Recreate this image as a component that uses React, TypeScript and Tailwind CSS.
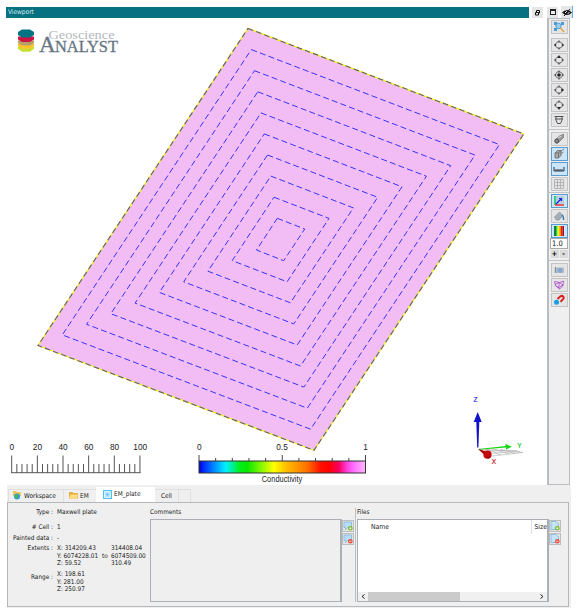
import type { ReactNode } from "react";

type Pt = [number, number];
const OUTER: Pt[] = [[248, 28.5], [523.7, 134], [314, 450.3], [38, 345.5]];
const INNER: Pt[] = [[277.3, 218.3], [304.7, 229], [283.7, 260.7], [256.5, 250]];
const ring = (i: number) =>
  OUTER.map(([x, y], k) => {
    const t = i / 9;
    return `${(x + (INNER[k][0] - x) * t).toFixed(1)},${(y + (INNER[k][1] - y) * t).toFixed(1)}`;
  }).join(" ");

const STOPS: [number, string][] = [
  [0, "#0000d0"], [0.03, "#0030ff"], [0.1, "#0098ff"], [0.16, "#00f0ff"], [0.21, "#00f080"],
  [0.24, "#00f020"], [0.29, "#08e800"], [0.38, "#90f800"], [0.45, "#ffff00"], [0.52, "#ffc000"],
  [0.65, "#ff7000"], [0.73, "#ff1000"], [0.78, "#ff0000"], [0.84, "#f80060"], [0.89, "#ff40e0"],
  [0.93, "#ff70ff"], [1, "#ffb8ff"],
];

function Scene() {
  return (
    <svg className="block h-[467px] w-[541px] shrink-0" viewBox="6 18 541 467" fontFamily='"Liberation Sans", Arial, sans-serif'>
      <defs>
        <linearGradient id="ramp">
          {STOPS.map(([o, c]) => <stop key={o} offset={o} stopColor={c} />)}
        </linearGradient>
      </defs>

      <polygon points={ring(0)} fill="#f2bdf4" stroke="#f4f01c" strokeWidth="1.3" />
      <polygon points={ring(0)} fill="none" stroke="#5c5c78" strokeWidth="1.1" strokeDasharray="5.500 3.200" />
      {[1, 2, 3, 4, 5, 6, 7, 8, 9].map((i) => (
        <polygon key={i} points={ring(i)} fill="none" stroke="#3434f4" strokeWidth="1" strokeDasharray="6 3.2" />
      ))}

      {/* brand */}
      <g>
        <path d="M18 46.500h16v2.200l-4 3h-8l-4-3z" fill="#c4de32" />
        <path d="M18 43.500h16v2.500l-4 2.700h-8l-4-2.700z" fill="#fcc52c" />
        <path d="M18 40.500h16v2.500l-4 2.500h-8l-4-2.500z" fill="#b5a069" />
        <path d="M18 36.500h16v3l-4 2.500h-8l-4-2.500z" fill="#cd1543" />
        <path d="M22 29.500h8l4 2.500v3l-4 2.500h-8l-4-2.500v-3z" fill="#007482" />
        <g fontFamily='"Liberation Serif", serif'>
          <text x="48.500" y="38.700" fontSize="12.500" fill="#b3b8bd" textLength="66" lengthAdjust="spacingAndGlyphs">Geoscience</text>
          <text x="39" y="52" fontSize="23" fill="#667583" stroke="#667583" strokeWidth=".3">A</text>
          <text x="55" y="52" fontSize="16.500" fill="#667583" stroke="#667583" strokeWidth=".3" textLength="63" lengthAdjust="spacingAndGlyphs">NALYST</text>
        </g>
      </g>

      {/* scale ruler */}
      <g stroke="#555" strokeWidth="1">
        {Array.from({ length: 26 }, (_, i) => (
          <line key={i} x1={11.7 + i * 5.13} x2={11.7 + i * 5.13} y1={i % 5 ? 464 : 455.5} y2={473} />
        ))}
        <line x1="11.200" x2="140.500" y1="472.700" y2="472.700" />
      </g>
      <g fontSize="8.300" fill="#222" textAnchor="middle">
        {[0, 20, 40, 60, 80, 100].map((n, i) => (
          <text key={n} x={11.7 + i * 25.7} y="450.200">{n}</text>
        ))}
        <text x="199.300" y="450">0</text>
        <text x="282" y="450">0.5</text>
        <text x="365.500" y="450">1</text>
        <text x="282" y="482" textLength="40.500" lengthAdjust="spacingAndGlyphs">Conductivity</text>
      </g>
      <rect x="199" y="461" width="166.500" height="12" fill="url(#ramp)" stroke="#333" strokeWidth="1" />
      <g stroke="#444">
        {Array.from({ length: 11 }, (_, i) => (
          <line key={i} x1={199 + i * 16.65} x2={199 + i * 16.65} y1={i % 5 ? 458 : 455} y2="461" />
        ))}
      </g>

      {/* orientation axes */}
      <g stroke="#aaa" strokeWidth=".6" fill="none">
        <path d="M479 449l31 2 13 1.500-31 3.500zM485 448.500l16 6.500M492 448.500l17 5.500M500 449l15 4.500M484 451l33-.5M488 453.500l32-2" />
      </g>
      <path d="M478.500 449l27-3v-2.200l6.500 3-6 2.700v-2l-27 2.200z" fill="#18d818" />
      <path d="M477.200 447.500l-.9-25.500h-2.600l4-10 4 10h-2.400l-.9 25.500z" fill="#1212c8" />
      <path d="M478 449l8.500 2.500-2 3.500z" fill="#a00" />
      <circle cx="487.500" cy="454.700" r="4.100" fill="#c60808" />
      <path d="M484.500 456.500q3 1.800 6.500-.3l-2.500 2.400z" fill="#700" />
      <g fontSize="6.500">
        <text x="473.500" y="401.500" fill="#3030e0" stroke="#3030e0" strokeWidth=".2">Z</text>
        <text x="517.300" y="447.800" fill="#20c020" stroke="#20c020" strokeWidth=".2">Y</text>
        <text x="491.800" y="463.500" fill="#c82020" stroke="#c82020" strokeWidth=".2">X</text>
      </g>
    </svg>
  );
}

function Tool({ on, children }: { on?: boolean; children: ReactNode }) {
  return (
    <button className={`flex h-[14px] w-[17px] shrink-0 items-center justify-center border ${on ? "border-[#5a9bd0] bg-[#cde5f8]" : "border-[#c4c4c4] bg-[#e5e5e5]"}`}>
      <svg className="h-3 w-3 shrink-0" viewBox="0 0 12 12" fill="none" stroke="#444" strokeWidth="1">{children}</svg>
    </button>
  );
}

function Diamond({ dot }: { dot: ReactNode }) {
  return (
    <Tool>
      <path d="M4.500 3h3L9.300 4.800v2.400L7.500 9h-3L2.700 7.200V4.800z" stroke="#555" />
      <path d="M6 1.500v1.500M6 9v1.500M1.200 6h1.500M9.300 6h1.500" stroke="#333" />
      {dot}
    </Tool>
  );
}

const Rule = () => <div className="h-px w-full shrink-0 bg-[#c4c4c4]" />;

function Toolbar() {
  return (
    <div className="flex h-[467px] w-[23px] shrink-0 flex-col items-center border-y border-r border-l-2 border-[#b9bcc1] bg-[#efefef] pt-px">
      <Tool>
        <path d="M1 1h3v3H1zM8 1h3v3H8zM1 7h3v3H1z" fill="#439bd8" stroke="none" />
        <circle cx="5.500" cy="5" r="2.700" fill="#9bd0f2" stroke="#579ecf" />
        <path d="M7.500 7l3.500 4" stroke="#e8a23d" strokeWidth="1.500" />
      </Tool>
      <div className="mt-1 mb-0.5 flex flex-col gap-px">
        <Diamond dot={<path d="M1 6l1.800-1.500v3zM11 6L9.200 4.500v3z" fill="#333" stroke="none" />} />
        <Diamond dot={<path d="M4.300 4l1.700-2.500L7.700 4z" fill="#222" stroke="none" />} />
        <Diamond dot={<circle cx="6" cy="6" r="1.800" fill="#222" stroke="none" />} />
        <Diamond dot={<path d="M8.300 4.300v3.400L10.700 6z" fill="#222" stroke="none" />} />
        <Diamond dot={<path d="M4.300 8h3.400L6 10.500z" fill="#222" stroke="none" />} />
        <Tool><path d="M1.500 2.500h9M2.500 5h7L7.500 9.500h-3zM3 2.500V5M9 2.500V5" strokeWidth=".9" /></Tool>
      </div>
      <Rule />
      <div className="mt-0.5 mb-px flex flex-col gap-px">
        <Tool><path d="M2 7l4.500-4 4-1.800v3.300L5 10H2.500z" fill="#999" stroke="#777" strokeWidth=".8" /><ellipse cx="3.700" cy="8" rx="1.900" ry="2" fill="#888" stroke="#555" /><path d="M5 5l3.500-2" stroke="#ddd" /></Tool>
        <Tool on><path d="M2 5l2.500-2.500H8v5L5.500 10H2z" fill="#aaa" stroke="#777" /><path d="M2 5h3.500v5M5.500 5L8 2.500M8 3l3-2M8 5.500L10.500 4" stroke="#666" strokeWidth=".8" /></Tool>
        <Tool on><path d="M1 4v4h10V4M3 6v2M5 6v2M7 6v2M9 6v2" stroke="#26384a" /></Tool>
        <Tool><path d="M1.500 1.500h9v9h-9zM4.500 1.500v9M7.500 1.500v9M1.500 4.500h9M1.500 7.500h9" stroke="#aaa" strokeWidth=".8" /></Tool>
      </div>
      <Rule />
      <div className="mt-px flex flex-col gap-px">
        <Tool on><path d="M3 1h8v8H3z" fill="#b8ccdc" stroke="none" /><path d="M2 1v9" stroke="#00c860" strokeWidth="1.500" /><path d="M2 10h9" stroke="#e83434" strokeWidth="1.500" /><path d="M3 9l5-5M6 3.500h2.500V6" stroke="#1720e5" strokeWidth="1.200" /></Tool>
        <Tool><path d="M1.500 7l5-5L10 5.500 6 10H3.500z" fill="#a2aeb8" stroke="#8a979f" strokeWidth=".8" /><path d="M9 5c1.500 1 1.700 3 1.500 5" stroke="#3483be" strokeWidth="1.500" /></Tool>
        <Tool on>
          <path d="M1 1h2v10H1z" fill="#137e44" stroke="none" /><path d="M3 1h1.500v10H3z" fill="#1ce03a" stroke="none" />
          <path d="M4.500 1h2v10h-2z" fill="#fff000" stroke="none" /><path d="M6.500 1H8v10H6.500z" fill="#ff8c00" stroke="none" />
          <path d="M8 1h1.500v10H8z" fill="#f01a1a" stroke="none" /><path d="M9.500 1H11v10H9.500z" fill="#971038" stroke="none" />
        </Tool>
      </div>
      <div className="flex h-[11px] w-[18px] shrink-0 items-center border border-[#aaa] bg-white pl-px text-[7.500px] leading-none text-[#111]">1.0</div>
      <div className="mb-px flex h-[10px] w-[17px] shrink-0 items-center justify-between text-[7px] font-bold leading-none">
        <span className="flex h-2 w-2 items-center justify-center bg-[#dadada]">+</span>
        <span className="flex h-2 w-2 items-center justify-center bg-[#dadada]">-</span>
      </div>
      <Rule />
      <div className="mt-0.5 flex flex-col gap-px">
        <Tool><path d="M1.500 3.500h9.500v5.500H1.500z" fill="#b5bcc3" stroke="none" /><path d="M2.500 3v6" stroke="#8a9299" /><circle cx="7" cy="6.300" r="2.100" fill="#78acea" stroke="#8aa2bd" strokeWidth=".8" /></Tool>
        <Tool><path d="M1.500 2.500l5 1 4-1.500-.5 5-3.500 3-4-3.500zM2 5.500l4.500-2L10 6M6.500 3.500l-1 5M2 6.500l5 3M5.500 8.500L10 6" stroke="#af45cb" strokeWidth=".8" /></Tool>
        <Tool><path d="M4.500 5l3-2.700c2-1.300 4 .9 2.700 2.500L7.500 7.800" stroke="#dc2020" strokeWidth="2" /><circle cx="3.500" cy="8.300" r="2.500" fill="#169fe4" stroke="none" /></Tool>
      </div>
    </div>
  );
}

function TitleBar() {
  return (
    <div className="flex h-3 w-full items-center pl-1.5">
      <div className="flex h-[11px] w-[523px] items-center bg-[#057181] pl-[2px] text-[6.500px] leading-none text-[#d9eef0]">Viewport</div>
      <div className="ml-[3px] flex h-[11px] w-[11px] items-center justify-center bg-[#e6e6e6]">
        <svg className="h-[7px] w-[7px]" viewBox="0 0 7 7" fill="#eee" stroke="#111"><path d="M2.500 1.500h3v2.500h-3z" /><path d="M1.500 3.500h3V6h-3z" /></svg>
      </div>
      <div className="ml-[4px] flex h-[11px] w-[11px] items-center justify-center bg-[#e6e6e6]">
        <div className="h-[6px] w-[6px] border border-t-2 border-[#222] bg-[#eee]" />
      </div>
      <div className="ml-[3px] flex h-[12px] w-[12px] items-center justify-center border-r border-[#69aee9] bg-[#e6e6e6]">
        <svg className="h-[9px] w-[10px]" viewBox="0 0 10 9"><path d="M0 4.500Q5-.5 10 4.500 5 9.500 0 4.500z" fill="#111" /><path d="M3 5l2-2M5.500 6l2-2" stroke="#fff" strokeWidth=".9" /><path d="M2 8L8 1" stroke="#111" /></svg>
      </div>
    </div>
  );
}

function Folder() {
  return (
    <svg className="mb-0.5 h-2 w-[9px] shrink-0" viewBox="0 0 9 8"><path d="M0 1h3.500l1 1H9v5.500H0z" fill="#e4ae43" /><path d="M1.500 3.500H9L8 7.500H0z" fill="#ffdc80" /></svg>
  );
}

function Tabs() {
  return (
    <div className="flex h-[17px] items-end pl-px text-[6.500px] leading-none">
      <div className="flex h-[13px] w-[55px] items-center gap-[3px] border-l border-t border-[#dfdfdf] pl-[4px]">
        <svg className="mb-px h-[9px] w-[8px] shrink-0" viewBox="0 0 8 9"><path d="M0 0h3l1 1h4v4H0z" fill="#f1c55b" /><circle cx="4" cy="5.500" r="3" fill="#2c9cdb" /><path d="M2 4l2-1 1 2-1 3-2-2z" fill="#48b849" /></svg>
        Workspace
      </div>
      <div className="flex h-[13px] w-[33px] items-center gap-[2px] border-l border-t border-[#dfdfdf] pl-[5px]"><Folder />EM</div>
      <div className="flex h-[15px] w-[59px] items-center gap-[2px] bg-white pl-[7px]">
        <svg className="mb-px h-[9px] w-[9px] shrink-0" viewBox="0 0 9 9"><path d="M0 0h9v9H0z" fill="#55bff0" /><path d="M1.500 1.500h6v6h-6z" fill="#b5e7ff" stroke="#fff" strokeWidth=".7" /><path d="M3.500 3.500h2v2h-2z" fill="#55bff0" /></svg>
        EM_plate
      </div>
      <div className="flex h-[13px] w-[23px] items-center border-t border-[#dfdfdf] pl-[6px] pt-px">Cell</div>
      <div className="h-[13px] w-[13px] border-x border-t border-[#dfdfdf]" />
    </div>
  );
}

function Side({ file }: { file?: boolean }) {
  return (
    <div className="mt-px flex w-3 shrink-0 flex-col gap-px">
      {["#79b722", "#e94b3c"].map((c, i) => (
        <button key={c} className="flex h-3 w-3 items-center justify-center border border-[#bdbdbd] bg-[#e3e3e3]">
          <svg className="h-[10px] w-[10px] shrink-0" viewBox="0 0 10 10">
            {file
              ? <path d="M1 .5h5L8.500 3v5.500H1z" fill="#c3e4f7" stroke="#7eb7da" strokeWidth=".8" />
              : <path d="M1 1h7.500v5.500H4.500l-2 2v-2H1z" fill="#b7def7" stroke="#82b8da" strokeWidth=".8" />}
            <circle cx="7.300" cy="7.300" r="2.300" fill={c} />
            <path d={i ? "M6 7.300h2.600" : "M6 7.300h2.600M7.300 6v2.600"} stroke="#fff" strokeWidth=".7" />
          </svg>
        </button>
      ))}
    </div>
  );
}

function Row({ label, h, children }: { label: string; h: string; children: ReactNode }) {
  return (
    <div className={`flex items-center ${h}`}>
      <div className="w-[44px] shrink-0 whitespace-nowrap text-right">{label} :</div>
      <div className="ml-[4px] whitespace-nowrap">{children}</div>
    </div>
  );
}

function Details() {
  return (
    <div className="flex w-[142px] shrink-0 flex-col">
      <Row label="Type" h="h-[16px]">Maxwell plate</Row>
      <Row label="# Cell" h="h-[14px]">1</Row>
      <Row label="Painted data" h="h-[9px]">-</Row>
      <div className="mt-[2px] flex h-[24px] leading-[7.500px]">
        <div className="w-[44px] shrink-0 text-right">Extents :</div>
        <div className="ml-[4px] grid grid-cols-[45px_9px_36px] grid-rows-[7.500px_7.500px_7.500px] whitespace-nowrap">
          <span>X: 314209.43</span><span /><span>314408.04</span>
          <span>Y: 6074228.01</span><span>to</span><span>6074509.00</span>
          <span>Z: 59.52</span><span /><span>310.49</span>
        </div>
      </div>
      <div className="mt-[2px] flex h-[23px] leading-[7.500px]">
        <div className="w-[44px] shrink-0 pt-[3px] text-right">Range :</div>
        <div className="ml-[4px]"><div>X: 198.61</div><div>Y: 281.00</div><div>Z: 250.97</div></div>
      </div>
    </div>
  );
}

function BottomPanel() {
  return (
    <div className="ml-[7px] h-[123px] w-[564px] bg-[#efefef] text-[#1c1c1c]">
      <Tabs />
      <div className="flex h-[105px] w-[562px] border border-[#b4b7bc] pt-px pl-px text-[6.400px] leading-none">
        <Details />
        <div className="ml-[-1px] w-[192px] shrink-0">
          <div className="flex h-[15px] items-center pt-px">Comments</div>
          <div className="h-[83px] border border-r-2 border-[#acb0b6]" />
        </div>
        <div className="pt-[15px]"><Side /></div>
        <div className="ml-px mt-1 h-[94px] w-px bg-[#bcbfc4]" />
        <div className="ml-px w-[192px] shrink-0">
          <div className="flex h-[15px] items-center pt-px">Files</div>
          <div className="flex h-[83px] flex-col border border-r-2 border-[#acb0b6] bg-white">
            <div className="flex h-[14px] items-center text-[6.800px]">
              <div className="pl-[13px]">Name</div>
              <div className="ml-auto flex h-full items-center border-l border-[#ddd] pl-[2px]">Size</div>
            </div>
            <div className="mt-auto flex h-[9px] items-center justify-between bg-[#f0f0f0] px-[3px]">
              <svg className="h-[5px] w-1" viewBox="0 0 4 5" fill="none" stroke="#222"><path d="M3.500.5l-2.500 2 2.500 2" /></svg>
              <div className="ml-[3px] mr-auto h-[9px] w-[92px] bg-[#cbcbcb]" />
              <svg className="h-[5px] w-1" viewBox="0 0 4 5" fill="none" stroke="#222"><path d="M.5.500L3 2.500l-2.500 2" /></svg>
            </div>
          </div>
        </div>
        <div className="pt-[15px]"><Side file /></div>
      </div>
    </div>
  );
}

export default function App() {
  return (
    <div className="h-[609px] w-[579px] overflow-hidden bg-white pt-1.5 [font-family:'DejaVu_Sans_Condensed','Open_Sans',sans-serif]">
      <TitleBar />
      <div className="flex pl-1.5">
        <Scene />
        <Toolbar />
      </div>
      <BottomPanel />
    </div>
  );
}
